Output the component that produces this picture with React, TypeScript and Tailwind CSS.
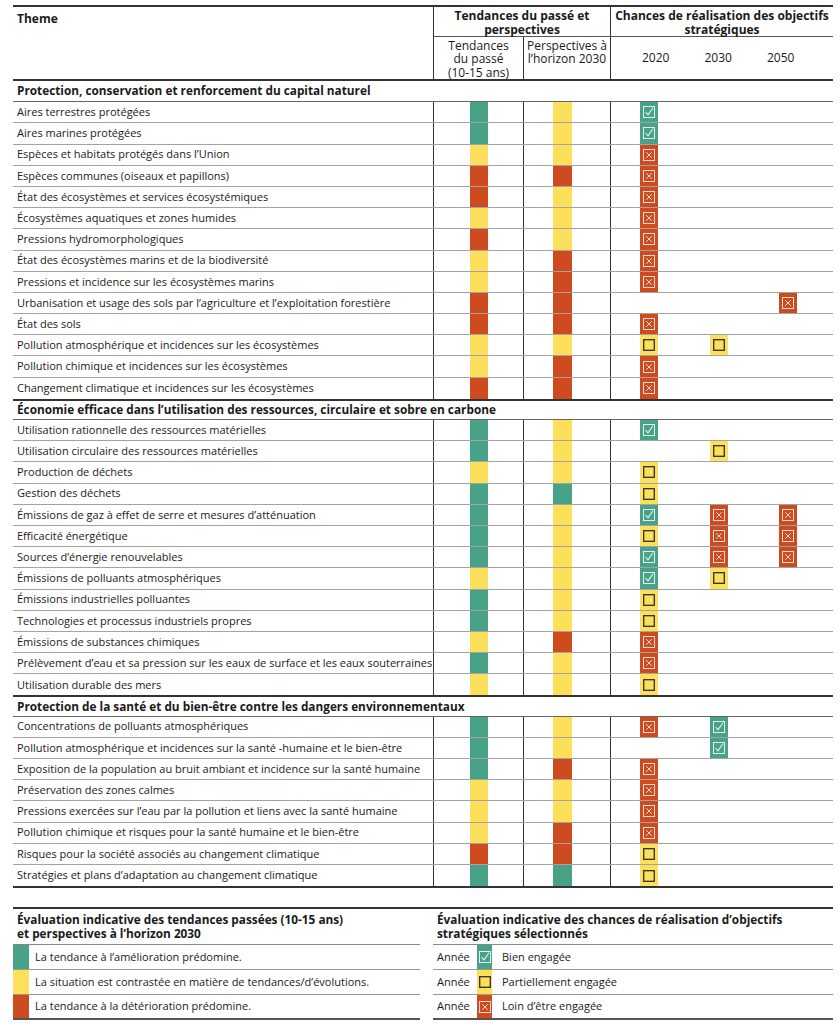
import clsx from "clsx";

type C = "G" | "Y" | "R" | "";

type Row = { t: string; p: C; s: C; a?: C; b?: C; c?: C };

const bg: Record<string, string> = {
  G: "bg-[#47a287]",
  Y: "bg-[#fce05b]",
  R: "bg-[#cd4b1f]",
  "": "",
};

const sections: { title: string; rows: Row[] }[] = [
  {
    title: "Protection, conservation et renforcement du capital naturel",
    rows: [
      { t: "Aires terrestres protégées", p: "G", s: "Y", a: "G" },
      { t: "Aires marines protégées", p: "G", s: "Y", a: "G" },
      { t: "Espèces et habitats protégés dans l’Union", p: "Y", s: "Y", a: "R" },
      { t: "Espèces communes (oiseaux et papillons)", p: "R", s: "R", a: "R" },
      { t: "État des écosystèmes et services écosystémiques", p: "R", s: "Y", a: "R" },
      { t: "Écosystèmes aquatiques et zones humides", p: "Y", s: "Y", a: "R" },
      { t: "Pressions hydromorphologiques", p: "R", s: "Y", a: "R" },
      { t: "État des écosystèmes marins et de la biodiversité", p: "Y", s: "R", a: "R" },
      { t: "Pressions et incidence sur les écosystèmes marins", p: "Y", s: "R", a: "R" },
      { t: "Urbanisation et usage des sols par l’agriculture et l’exploitation forestière", p: "R", s: "R", c: "R" },
      { t: "État des sols", p: "R", s: "R", a: "R" },
      { t: "Pollution atmosphérique et incidences sur les écosystèmes", p: "Y", s: "Y", a: "Y", b: "Y" },
      { t: "Pollution chimique et incidences sur les écosystèmes", p: "Y", s: "R", a: "R" },
      { t: "Changement climatique et incidences sur les écosystèmes", p: "R", s: "R", a: "R" },
    ],
  },
  {
    title: "Économie efficace dans l’utilisation des ressources, circulaire et sobre en carbone",
    rows: [
      { t: "Utilisation rationnelle des ressources matérielles", p: "G", s: "Y", a: "G" },
      { t: "Utilisation circulaire des ressources matérielles", p: "G", s: "Y", b: "Y" },
      { t: "Production de déchets", p: "Y", s: "Y", a: "Y" },
      { t: "Gestion des déchets", p: "G", s: "G", a: "Y" },
      { t: "Émissions de gaz à effet de serre et mesures d’atténuation", p: "G", s: "Y", a: "G", b: "R", c: "R" },
      { t: "Efficacité énergétique", p: "G", s: "Y", a: "Y", b: "R", c: "R" },
      { t: "Sources d’énergie renouvelables", p: "G", s: "Y", a: "G", b: "R", c: "R" },
      { t: "Émissions de polluants atmosphériques", p: "Y", s: "Y", a: "G", b: "Y" },
      { t: "Émissions industrielles polluantes", p: "G", s: "Y", a: "Y" },
      { t: "Technologies et processus industriels propres", p: "G", s: "Y", a: "Y" },
      { t: "Émissions de substances chimiques", p: "Y", s: "R", a: "R" },
      { t: "Prélèvement d’eau et sa pression sur les eaux de surface et les eaux souterraines", p: "G", s: "Y", a: "R" },
      { t: "Utilisation durable des mers", p: "Y", s: "Y", a: "Y" },
    ],
  },
  {
    title: "Protection de la santé et du bien-être contre les dangers environnementaux",
    rows: [
      { t: "Concentrations de polluants atmosphériques", p: "G", s: "Y", a: "R", b: "G" },
      { t: "Pollution atmosphérique et incidences sur la santé -humaine et le bien-être", p: "G", s: "Y", b: "G" },
      { t: "Exposition de la population au bruit ambiant et incidence sur la santé humaine", p: "G", s: "R", a: "R" },
      { t: "Préservation des zones calmes", p: "Y", s: "Y", a: "R" },
      { t: "Pressions exercées sur l’eau par la pollution et liens avec la santé humaine", p: "Y", s: "Y", a: "R" },
      { t: "Pollution chimique et risques pour la santé humaine et le bien-être", p: "Y", s: "R", a: "R" },
      { t: "Risques pour la société associés au changement climatique", p: "R", s: "R", a: "Y" },
      { t: "Stratégies et plans d’adaptation au changement climatique", p: "G", s: "G", a: "Y" },
    ],
  },
];

function Mark({ c }: { c: C }) {
  if (c === "G")
    return (
      <svg width="12" height="12" viewBox="0 0 12 12">
        <rect x="0.5" y="0.5" width="11" height="11" fill="none" stroke="#e4f1ec" strokeWidth="1" />
        <path d="M2.6 6.2 L5 8.8 L10 1.8" fill="none" stroke="#e4f1ec" strokeWidth="1.1" />
      </svg>
    );
  if (c === "R")
    return (
      <svg width="12" height="12" viewBox="0 0 12 12">
        <rect x="0.5" y="0.5" width="11" height="11" fill="none" stroke="#f6ddd3" strokeWidth="1" />
        <path d="M3.2 3.2 L8.8 8.8 M8.8 3.2 L3.2 8.8" fill="none" stroke="#f6ddd3" strokeWidth="1" />
      </svg>
    );
  if (c === "Y")
    return (
      <svg width="12" height="12" viewBox="0 0 12 12">
        <rect x="0.7" y="0.7" width="10.6" height="10.6" fill="none" stroke="#2f2f2f" strokeWidth="1.3" />
      </svg>
    );
  return null;
}

function Goal({ c, w, pl }: { c?: C; w: string; pl: string }) {
  return (
    <div className={clsx("h-full", w, pl)}>
      {c ? (
        <div className={clsx("flex h-full w-[18px] items-center justify-center", bg[c])}>
          <Mark c={c} />
        </div>
      ) : null}
    </div>
  );
}

function DataRow({ row, last }: { row: Row; last: boolean }) {
  return (
    <div className={clsx("flex h-[21.2px]", last ? "" : "border-b border-[#a3a3a3]")}>
      <div className="flex w-[420px] items-center pl-[4px] text-[11px] text-[#1a1a1a]">{row.t}</div>
      <div className="w-[90px] border-l border-[#333] pl-[36px]">
        <div className={clsx("h-full w-[18px]", bg[row.p])} />
      </div>
      <div className="w-[87px] border-l border-[#333] pl-[29px]">
        <div className={clsx("h-full w-[19px]", bg[row.s])} />
      </div>
      <div className="flex w-[223px] border-l border-[#333]">
        <Goal c={row.a} w="w-[70px]" pl="pl-[29px]" />
        <Goal c={row.b} w="w-[70px]" pl="pl-[29px]" />
        <Goal c={row.c} w="w-[82px]" pl="pl-[28px]" />
      </div>
    </div>
  );
}

export default function App() {
  return (
    <main className="min-h-screen bg-white pt-[5px] font-['Open_Sans',sans-serif] text-[#1a1a1a]">
      <div className="ml-[13px] w-[820px] border-t-2 border-[#333]">
        <div className="flex h-[74px] border-b-2 border-[#333]">
          <div className="w-[420px] pl-[4px] pt-[3px] text-[12px] font-bold">Theme</div>
          <div className="flex w-[400px] flex-col">
            <div className="flex h-[30px] border-b border-[#555] text-[12px] font-bold leading-[13.5px]">
              <div className="w-[177px] border-l border-[#333] pt-[2px] text-center">
                Tendances du passé et
                <br />
                perspectives
              </div>
              <div className="w-[223px] border-l border-[#333] pt-[2px] text-center">
                Chances de réalisation des objectifs
                <br />
                stratégiques
              </div>
            </div>
            <div className="flex flex-1 text-[12px] leading-[13.3px]">
              <div className="w-[90px] border-l border-[#333] pt-[2px] text-center">
                Tendances
                <br />
                du passé
                <br />
                (10-15 ans)
              </div>
              <div className="w-[87px] border-l border-[#333] pt-[2px] text-center">
                Perspectives à
                <br />
                l’horizon 2030
              </div>
              <div className="flex w-[223px] items-center gap-[35px] border-l border-[#333] pl-[31px]">
                <span>2020</span>
                <span>2030</span>
                <span>2050</span>
              </div>
            </div>
          </div>
        </div>

        {sections.map((sec, si) => (
          <div key={sec.title} className={clsx(si === sections.length - 1 && "border-b-2 border-[#333]")}>
            <div
              className={clsx(
                "flex h-[21.2px] items-center border-b border-[#666] pl-[4px] text-[11.8px] font-bold",
                si > 0 && "border-t-2 border-t-[#333]"
              )}
            >
              {sec.title}
            </div>
            {sec.rows.map((r, i) => (
              <DataRow key={r.t} row={r} last={i === sec.rows.length - 1} />
            ))}
          </div>
        ))}
      </div>

      <div className="ml-[13px] mt-[19px] flex w-[820px] gap-[13px] border-t-2 border-[#333]">
        <div className="w-[407px]">
          <div className="h-[36px] border-b border-[#888] pl-[4px] pt-[3px] text-[11.8px] font-bold leading-[14px]">
            Évaluation indicative des tendances passées (10-15 ans)
            <br />
            et perspectives à l’horizon 2030
          </div>
          {[
            ["G", "La tendance à l’amélioration prédomine."],
            ["Y", "La situation est contrastée en matière de tendances/d’évolutions."],
            ["R", "La tendance à la détérioration prédomine."],
          ].map(([c, t], i) => (
            <div key={t} className={clsx("flex h-[25px] items-center", i === 2 ? "border-b-2 border-[#555]" : "border-b border-[#999]")}>
              <div className={clsx("h-full w-[16px]", bg[c])} />
              <span className="pl-[6px] text-[11px]">{t}</span>
            </div>
          ))}
        </div>
        <div className="flex-1">
          <div className="h-[36px] border-b border-[#888] pl-[4px] pt-[3px] text-[11.8px] font-bold leading-[14px]">
            Évaluation indicative des chances de réalisation d’objectifs
            <br />
            stratégiques sélectionnés
          </div>
          {[
            ["G", "Bien engagée"],
            ["Y", "Partiellement engagée"],
            ["R", "Loin d’être engagée"],
          ].map(([c, t], i) => (
            <div key={t} className={clsx("flex h-[25px] items-center text-[11px]", i === 2 ? "border-b-2 border-[#555]" : "border-b border-[#999]")}>
              <span className="w-[44px] pl-[4px]">Année</span>
              <div className={clsx("flex h-full w-[15px] items-center justify-center", bg[c])}>
                <Mark c={c as C} />
              </div>
              <span className="ml-[10px]">{t}</span>
            </div>
          ))}
        </div>
      </div>
    </main>
  );
}
